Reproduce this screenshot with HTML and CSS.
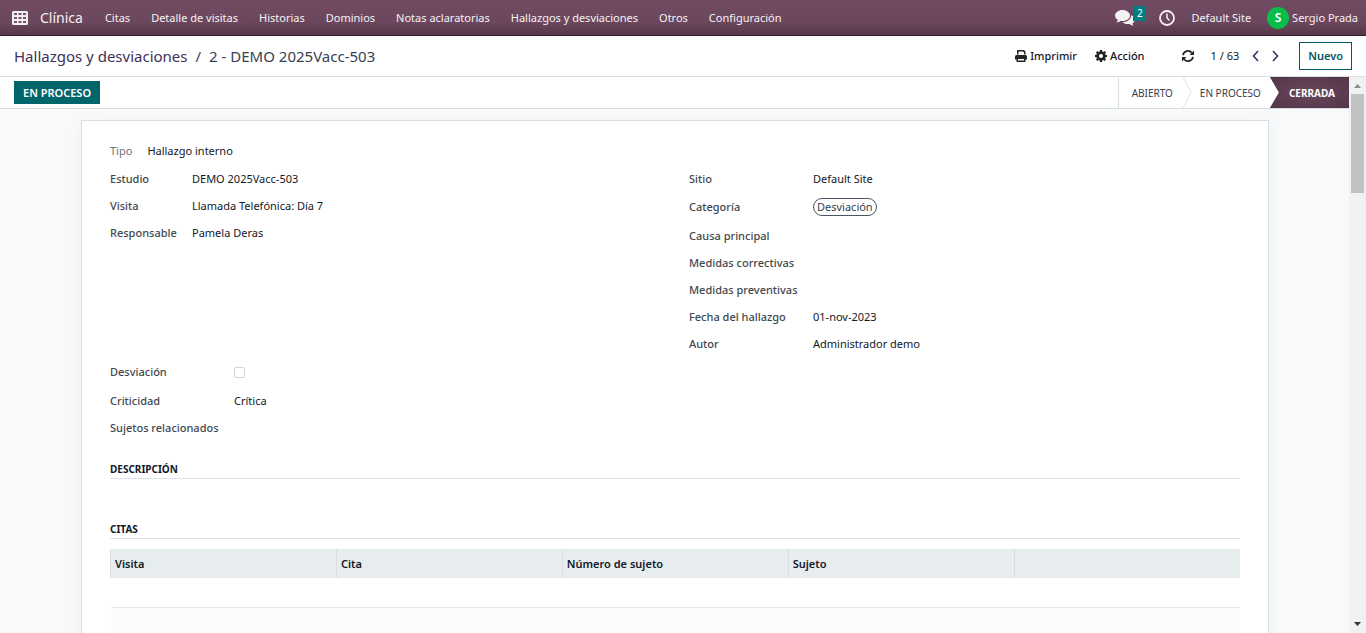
FILE: index.html
```html
<!DOCTYPE html>
<html lang="es">
<head>
<meta charset="utf-8">
<title>Clínica - Hallazgos y desviaciones</title>
<link rel="stylesheet" href="styles.css">
</head>
<body>
<header class="navbar">
  <button class="icon-btn apps" aria-label="Aplicaciones">
    <svg width="16" height="14" viewBox="0 0 16 14"><rect width="16" height="14" rx="1.5" fill="#f3eef1"/><path d="M2 2h3v2H2zM6.500 2h3v2h-3zM11 2h3v2h-3zM2 6h3v2H2zM6.500 6h3v2h-3zM11 6h3v2h-3zM2 10h3v2H2zM6.500 10h3v2h-3zM11 10h3v2h-3z" fill="#765468"/></svg>
  </button>
  <a class="brand" href="#">Clínica</a>
  <nav class="menu">
    <a href="#">Citas</a><a href="#">Detalle de visitas</a><a href="#">Historias</a><a href="#">Dominios</a><a href="#">Notas aclaratorias</a><a href="#">Hallazgos y desviaciones</a><a href="#">Otros</a><a href="#">Configuración</a>
  </nav>
  <div class="systray">
    <button class="icon-btn messages" aria-label="Conversaciones">
      <svg width="20" height="17" viewBox="0 0 20 17" fill="#f5f1f3"><path d="M7.500 0C3.400 0 0 2.500 0 5.600c0 1.800 1.100 3.400 2.900 4.400-.2.900-.8 1.800-1.500 2.500 1.700-.1 3.200-.8 4.300-1.700.6.100 1.200.2 1.800.2 4.200 0 7.500-2.500 7.500-5.500S11.700 0 7.500 0z"/><path d="M16.200 5.200c.1 3.800-3.800 6.900-8.600 7 1.400 1.200 3.500 1.900 5.600 1.900.5 0 1-.1 1.500-.2 1.100.9 2.500 1.600 4.100 1.700-.7-.6-1.200-1.400-1.400-2.200 1.500-.8 2.500-2.200 2.500-3.800 0-1.800-1.400-3.500-3.700-4.400z"/></svg>
      <span class="count">2</span>
    </button>
    <button class="icon-btn" aria-label="Actividades">
      <svg width="16" height="16" viewBox="0 0 16 16" fill="none" stroke="#f5f1f3"><circle cx="8" cy="8" r="7" stroke-width="1.800"/><path d="M8 3.500V8l2.500 2.500" stroke-width="1.500"/></svg>
    </button>
    <a class="company" href="#">Default Site</a>
    <a class="user" href="#"><span class="avatar">S</span>Sergio Prada</a>
  </div>
</header>

<section class="control-panel">
  <div class="breadcrumb"><a href="#">Hallazgos y desviaciones</a><span>/</span><span>2 - DEMO 2025Vacc-503</span></div>
  <div class="actions">
    <button class="action"><svg width="12" height="12" viewBox="0 0 12 12"><path d="M2 0h7l1.500 1.500V4.500H9V2.500L8 1.500H3.500v3H2zM1.500 5h9A1.500 1.500 0 0 1 12 6.500V9.500h-1.500V8h-9v1.500H0v-3A1.500 1.500 0 0 1 1.500 5zM1.500 8h9v4h-9z" fill="#212529"/><path d="M3 9h6v1.500H3z" fill="#fff"/></svg>Imprimir</button>
    <button class="action"><svg width="12" height="12" viewBox="0 0 12 12"><path fill="#212529" fill-rule="evenodd" d="M5 0h2l.3 1.600 1 .4 1.400-.9 1.300 1.300-.9 1.400.4 1L12 5v2l-1.500.3-.4 1 .9 1.400-1.300 1.300-1.400-.9-1 .4L7 12H5l-.3-1.500-1-.4-1.400.9L1 9.700l.9-1.400-.4-1L0 7V5l1.500-.3.4-1L1 2.400 2.300 1.100l1.400.9 1-.4zM6 4a2 2 0 1 0 0 4 2 2 0 0 0 0-4z"/></svg>Acción</button>
  </div>
  <div class="pager">
    <button class="icon-btn reload" aria-label="Recargar"><svg width="12" height="12" viewBox="0 0 12 12" fill="none" stroke="#212529" stroke-width="1.700"><path d="M1 5.200A5 5 0 0 1 9.800 2.800M11 6.800A5 5 0 0 1 2.200 9.200"/><path d="M12 .5v4.500H7.500zM0 11.500V7h4.500z" fill="#212529" stroke="none"/></svg></button>
    <span>1 / 63</span>
    <button class="icon-btn" aria-label="Anterior"><svg width="7" height="12" viewBox="0 0 7 12" fill="none" stroke="#3f2c5c" stroke-width="1.600"><path d="M6 1 1.500 6 6 11"/></svg></button>
    <button class="icon-btn" aria-label="Siguiente"><svg width="7" height="12" viewBox="0 0 7 12" fill="none" stroke="#3f2c5c" stroke-width="1.600"><path d="M1 1l4.500 5L1 11"/></svg></button>
  </div>
  <button class="new">Nuevo</button>
</section>

<div class="content">
  <main class="form-view">
    <div class="statusbar">
      <button class="process">EN PROCESO</button>
      <div class="stages">
        <button class="stage">ABIERTO</button>
        <svg class="sep" width="10" height="31" viewBox="0 0 10 31" fill="none" stroke="#dee2e6"><path d="M1 0l8 15.500L1 31"/></svg>
        <button class="stage">EN PROCESO</button>
        <button class="stage current">CERRADA</button>
      </div>
    </div>
    <div class="sheet-area">
      <article class="sheet">
        <div class="type-row"><span class="muted">Tipo</span><span>Hallazgo interno</span></div>
        <div class="groups">
          <dl class="group narrow">
            <dt>Estudio</dt><dd>DEMO 2025Vacc-503</dd>
            <dt>Visita</dt><dd>Llamada Telefónica: Día 7</dd>
            <dt>Responsable</dt><dd>Pamela Deras</dd>
          </dl>
          <dl class="group">
            <dt>Sitio</dt><dd>Default Site</dd>
            <dt class="tall">Categoría</dt><dd class="tall"><span class="tag">Desviación</span></dd>
            <dt>Causa principal</dt><dd></dd>
            <dt>Medidas correctivas</dt><dd></dd>
            <dt>Medidas preventivas</dt><dd></dd>
            <dt>Fecha del hallazgo</dt><dd>01-nov-2023</dd>
            <dt>Autor</dt><dd>Administrador demo</dd>
          </dl>
          <dl class="group">
            <dt class="tall"><label for="desviacion">Desviación</label></dt><dd class="tall"><input class="check" id="desviacion" type="checkbox"></dd>
            <dt>Criticidad</dt><dd>Crítica</dd>
            <dt>Sujetos relacionados</dt><dd></dd>
          </dl>
        </div>
        <h2 class="section-title">DESCRIPCIÓN</h2>
        <h2 class="section-title citations">CITAS</h2>
        <table class="list">
          <thead><tr><th>Visita</th><th>Cita</th><th>Número de sujeto</th><th>Sujeto</th><th></th></tr></thead>
          <tbody><tr><td colspan="5"></td></tr></tbody>
          <tfoot><tr><td colspan="5"></td></tr></tfoot>
        </table>
      </article>
    </div>
  </main>
  <div class="scrollbar" aria-hidden="true">
    <svg width="17" height="17" viewBox="0 0 17 17"><path d="M5 11h7L8.500 7z" fill="#8b8b8b"/></svg>
    <div class="thumb"></div>
    <svg width="17" height="17" viewBox="0 0 17 17"><path d="M5 6h7l-3.500 4z" fill="#333"/></svg>
  </div>
</div>
</body>
</html>
```

FILE: styles.css
```css
* { box-sizing: border-box; }
body {
  margin: 0;
  height: 100vh;
  display: flex;
  flex-direction: column;
  overflow: hidden;
  font: 11px/20px "Noto Sans", "Open Sans", sans-serif;
  color: #111827;
  background: #fff;
}
a { color: inherit; text-decoration: none; }
button { font: inherit; color: inherit; background: none; border: 0; padding: 0; margin: 0; white-space: nowrap; }
svg { display: block; flex: none; }
.icon-btn { display: flex; align-items: center; }

.navbar {
  flex: none;
  height: 36px;
  display: flex;
  align-items: center;
  padding: 1px 8px 0 12px;
  color: #f5f1f3;
  background: linear-gradient(#714b62 0, #6b475d 65%, #553747 100%);
  border-bottom: 1px solid #321d2c;
  white-space: nowrap;
}
.brand { margin: 0 22px 0 12px; font-size: 14px; }
.menu { display: flex; gap: 21px; }
.systray { margin-left: auto; display: flex; align-items: center; gap: 16px; }
.messages { position: relative; margin-right: 8px; }
.count {
  position: absolute;
  left: 18px;
  top: -4px;
  width: 13px;
  height: 15px;
  background: #017e84;
  color: #fff;
  font-size: 10px;
  line-height: 15px;
  text-align: center;
}
.user { display: flex; align-items: center; gap: 3px; }
.avatar {
  width: 22px;
  height: 22px;
  border-radius: 50%;
  background: #08be4b;
  color: #fff;
  font-size: 12px;
  font-weight: 600;
  line-height: 22px;
  text-align: center;
}

.control-panel {
  flex: none;
  height: 41px;
  display: flex;
  align-items: center;
  padding: 0 14px;
  border-bottom: 1px solid #d8dfe3;
  white-space: nowrap;
}
.breadcrumb { display: flex; gap: 8px; margin-right: auto; font-size: 15px; color: #374151; }
.breadcrumb a { color: #3d3158; }
.actions { display: flex; gap: 18px; font-weight: 500; }
.action { display: flex; align-items: center; gap: 3px; }
.pager { display: flex; align-items: center; gap: 13px; margin: 0 20px 0 37px; }
.reload { margin-right: 4px; }
.new { height: 28px; padding: 0 8px; border: 1px solid #015a5f; color: #015a5f; font-weight: 600; }

.content { flex: 1; min-height: 0; display: flex; }
.form-view { flex: 1; min-width: 0; overflow: hidden; background: #f8f9fb; }
.statusbar {
  height: 32px;
  display: flex;
  align-items: center;
  justify-content: space-between;
  padding-left: 14px;
  background: #fff;
  border-bottom: 1px solid #d8dfe3;
}
.process { height: 23px; padding: 0 9px; background: #01666b; color: #fff; font-weight: 600; }
.stages { height: 31px; display: flex; border-left: 1px solid #d8dfe3; font-size: 10px; color: #374151; }
.stage { padding: 0 9px 0 13px; }
.sep + .stage { padding-left: 8px; }
.stage.current {
  padding: 0 14px 0 19px;
  background: radial-gradient(#6a465c, #523548);
  clip-path: polygon(0 0, 100% 0, 100% 100%, 0 100%, 9px 50%);
  color: #fff;
  font-weight: 700;
}

.sheet-area { padding: 11px 80px 0 81px; }
.sheet {
  min-height: 600px;
  padding: 16px 28px;
  background: #fff;
  border: 1px solid #d8dfe3;
  box-shadow: 0 4px 16px rgba(0, 0, 0, .04);
}
.type-row { display: flex; align-items: center; gap: 15px; height: 28px; }
.muted { color: #6b7280; }
.groups { display: grid; grid-template-columns: 1fr 1fr; column-gap: 28px; }
.group { display: grid; grid-template-columns: 124px 1fr; grid-auto-rows: min-content; margin: 0; }
.group.narrow { grid-template-columns: 82px 1fr; }
.group dt, .group dd { height: 27px; display: flex; align-items: center; margin: 0; white-space: nowrap; }
.group dt { color: #42484f; font-weight: 500; }
.group .tall { height: 30px; }
.tag { padding: 0 3px; border: 1px solid #4b5563; border-radius: 9px; line-height: 16px; color: #374151; }
.check { appearance: none; width: 11px; height: 11px; margin: 0; border: 1px solid #d1d5db; border-radius: 2px; background: #fff; }

.section-title {
  margin: 20px 0 0;
  border-bottom: 1px solid #dee2e6;
  font-size: 10px;
  line-height: 17px;
  font-weight: 700;
}
.section-title.citations { margin-top: 42px; }
.list { width: 100%; margin-top: 10px; border-collapse: collapse; table-layout: fixed; }
.list th { height: 29px; padding: 0 4px; background: #e7ecef; border-left: 1px solid #d8dfe3; text-align: left; font-weight: 600; }
.list td { padding: 0; height: 29px; }
.list tfoot td { height: 40px; background: #fcfcfc; border-top: 1px solid #e5e7eb; }

.scrollbar { flex: none; width: 17px; display: flex; flex-direction: column; background: #f1f1f1; }
.thumb { height: 99px; margin: 0 2px auto; background: #c1c1c1; }
```
